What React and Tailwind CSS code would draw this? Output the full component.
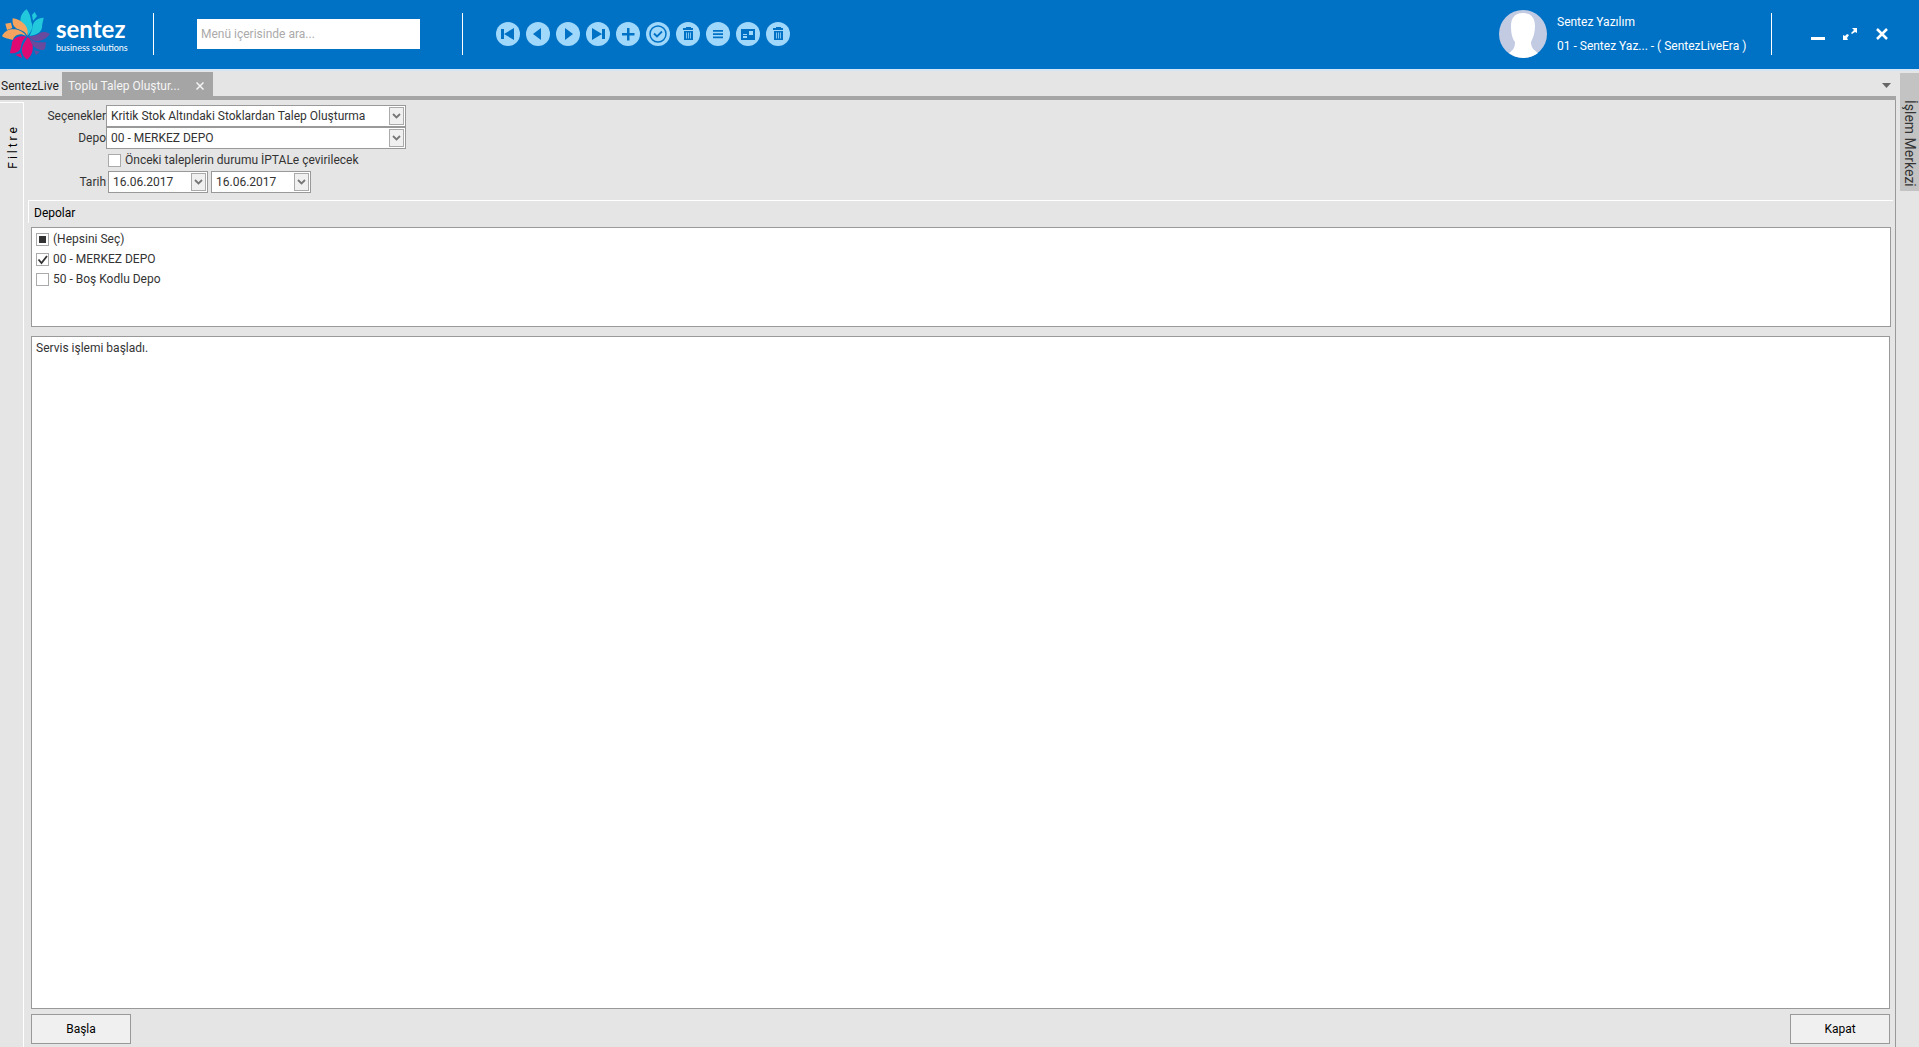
import React, { useEffect, useRef, useState } from "react";

const toolbar = [
  { label: "İlk kayıt", icon: <path d="M5 7h3v10H5zM18 6v12l-10-6z" /> },
  { label: "Önceki kayıt", icon: <path d="M15 6v12l-8-6z" /> },
  { label: "Sonraki kayıt", icon: <path d="M9 6v12l8-6z" /> },
  { label: "Son kayıt", icon: <path d="M16 7h3v10h-3zM6 6v12l10-6z" /> },
  { label: "Yeni", icon: <path d="M11 6h2.500v5h5v2.500h-5v5H11v-5H6V11h5z" /> },
  {
    label: "Kaydet",
    icon: (
      <g fill="none" stroke="#0072c6">
        <circle cx="12" cy="12" r="8" strokeWidth="1.5" />
        <path d="M8 11.5l3 3 5-5" strokeWidth="1.8" />
      </g>
    ),
  },
  { label: "Sil", icon: <TrashShape /> },
  { label: "Liste", icon: <path d="M7 8h10v1.800H7zM7 11.200h10V13H7zM7 14.400h10v1.800H7z" /> },
  {
    label: "Kart",
    icon: (
      <path
        fillRule="evenodd"
        d="M5 7h14v11H5zM13 9v4h4V9zM7 12v1h4v-1zM7 14v2h4v-2z"
      />
    ),
  },
  { label: "Temizle", icon: <TrashShape /> },
];

function TrashShape() {
  return (
    <path
      fillRule="evenodd"
      d="M10 5h5v1h2v2H7V6h3zM8 9h9v9H8zM10 10.500v6h.8v-6zM12.100 10.500v6h.8v-6zM14.200 10.500v6h.8v-6z"
    />
  );
}

const Logo = () => (
  <a href="#" aria-label="sentez" className="flex w-[153px] items-center">
    <svg viewBox="0 0 162 168" className="h-[56px] w-[54px]">
      <g fill="#22c9dc">
        <path d="M80 10C62 22 56 42 66 58C74 70 84 76 84 88C98 72 100 60 94 48C92 32 88 20 80 10z" />
        <path d="M96 27l8-9l7 13l-12 13z" />
        <path d="M131 35C112 36 100 46 98 60C96 74 92 84 88 90C108 88 124 80 126 64C126 52 130 44 131 35z" />
      </g>
      <g fill="#f4a45f">
        <path d="M38 37C36 56 42 66 56 70C68 74 78 80 82 90C86 74 80 60 70 52C60 42 50 38 38 37z" />
        <path d="M16 53l17-3l4 16l-16 6z" />
        <path d="M6 90C16 72 30 68 46 70C62 73 72 80 78 90C60 80 44 86 38 102C28 98 14 98 6 90z" />
      </g>
      <g fill="#dc0a72">
        <path d="M36 108C36 120 30 134 30 142C46 142 60 138 63 122C65 106 72 98 80 92C60 88 42 94 36 108z" />
        <path d="M46 147l16-5l4 14z" />
        <path d="M82 161C66 150 62 134 69 118C74 106 80 100 82 93C96 100 100 118 98 132C96 146 88 154 82 161z" />
      </g>
      <g fill="#6a4a9c">
        <path d="M150 84C136 76 126 76 116 84C104 90 94 92 86 89C92 102 104 108 120 104C134 102 142 94 150 84z" />
        <path d="M87 94C96 108 110 110 122 109L138 109C136 122 138 128 130 132C112 134 94 122 87 94z" />
        <path d="M102 133l18 4l-12 10z" />
      </g>
    </svg>
    <span className="ml-[2px] flex flex-col font-['Lato',sans-serif] text-white">
      <span className="text-[24px] leading-[26px] font-bold">sentez</span>
      <span className="text-[9px] leading-[11px] whitespace-nowrap">
        business solutions
      </span>
    </span>
  </a>
);

const Chevron = () => (
  <svg viewBox="0 0 9 6" className="h-[6px] w-[9px]" fill="none" stroke="#777" strokeWidth="1.8">
    <path d="M1 1l3.500 3.500L8 1" />
  </svg>
);

const Combo = ({ id, options }) => (
  <div className="grid h-[22px] border border-[#999] bg-white">
    <select
      id={id}
      className="col-start-1 row-start-1 w-full appearance-none bg-transparent pl-1 pr-6 outline-none"
    >
      {options.map((o) => (
        <option key={o}>{o}</option>
      ))}
    </select>
    <span className="pointer-events-none col-start-1 row-start-1 m-px flex w-[15px] items-center justify-center justify-self-end border border-[#aaa] bg-[#f0f0f0]">
      <Chevron />
    </span>
  </div>
);

const DateBox = ({ id, label }) => (
  <div className="flex h-[22px] w-[100px] border border-[#999] bg-white">
    <input
      id={id}
      aria-label={label}
      defaultValue="16.06.2017"
      className="min-w-0 flex-1 pl-1 outline-none"
    />
    <button
      type="button"
      aria-label="Takvim"
      className="m-px flex w-[15px] items-center justify-center border border-[#aaa] bg-[#f0f0f0]"
    >
      <Chevron />
    </button>
  </div>
);

const Check = ({ id, label, checked = false, partial = false, onChange }) => {
  const ref = useRef(null);

  useEffect(() => {
    ref.current.indeterminate = partial;
  }, [partial]);

  return (
    <div className="flex h-5 items-center gap-1">
      <span className="grid">
        <input
          ref={ref}
          id={id}
          type="checkbox"
          checked={checked}
          onChange={onChange}
          className="col-start-1 row-start-1 size-[13px] appearance-none border border-[#aaa] bg-white"
        />
        <svg viewBox="0 0 13 13" className="pointer-events-none col-start-1 row-start-1 size-[13px]">
          {partial && <path d="M3 3h7v7H3z" fill="#333" />}
          {checked && !partial && (
            <path d="M2.500 6.500l3 3.500L11 3" fill="none" stroke="#333" strokeWidth="1.800" />
          )}
        </svg>
      </span>
      <label htmlFor={id}>{label}</label>
    </div>
  );
};

const Header = () => (
  <header className="flex h-[71px] items-center border-b-2 border-[#d5e7f6] bg-[#0072c6] pb-px text-white">
    <Logo />
    <span className="h-[42px] w-px bg-white" />
    <input
      type="search"
      aria-label="Menü içerisinde ara"
      placeholder="Menü içerisinde ara..."
      className="ml-[43px] h-[30px] w-[223px] bg-white px-1 text-black outline-none placeholder:text-[#aaa]"
    />
    <span className="ml-[42px] h-[42px] w-px bg-white" />
    <nav className="ml-[33px] flex gap-[6px]">
      {toolbar.map((t) => (
        <button
          key={t.label}
          type="button"
          aria-label={t.label}
          className="size-6 rounded-full bg-[#9fd8fb]"
        >
          <svg viewBox="0 0 24 24" className="size-6" fill="#0072c6">
            {t.icon}
          </svg>
        </button>
      ))}
    </nav>
    <div className="ml-auto flex items-center">
      <svg viewBox="0 0 48 48" className="size-12">
        <circle cx="24" cy="24" r="24" fill="#c3cbe2" />
        <path
          d="M24 3c9 0 12 6 12 13c0 7-2 12-4 16c0 6 3 8 7 11a24 24 0 0 1-29 0c4-3 6-5 6-11c-3-4-4-9-4-16c0-7 3-13 12-13z"
          fill="#fff"
        />
      </svg>
      <div className="ml-[10px] w-[214px] leading-6 whitespace-nowrap">
        <p>Sentez Yazılım</p>
        <p>01 - Sentez Yaz... - ( SentezLiveEra )</p>
      </div>
      <span className="h-[42px] w-px bg-white" />
      <div className="mr-[30px] ml-[39px] flex gap-[18px]">
        <button type="button" aria-label="Küçült">
          <svg viewBox="0 0 14 14" className="size-[14px]">
            <path d="M0 10h14v3H0z" fill="#fff" />
          </svg>
        </button>
        <button type="button" aria-label="Boyutlandır">
          <svg viewBox="0 0 14 14" className="size-[14px]" fill="#fff">
            <path d="M9 1h5v5l-2-1l-3 2l-1-1l3-3zM0 8l2 1l2-2l2 1l-2 3l1 2H0z" />
          </svg>
        </button>
        <button type="button" aria-label="Kapat">
          <svg viewBox="0 0 14 14" className="size-[14px]" stroke="#fff" strokeWidth="2.500">
            <path d="M2 2l10 10M12 2L2 12" />
          </svg>
        </button>
      </div>
    </div>
  </header>
);

const Tabs = () => (
  <div className="flex h-[29px] items-stretch border-b-4 border-[#a5a5a5] pt-px">
    <button type="button" className="w-[62px] pt-[3px] pl-px text-left whitespace-nowrap text-[#222]">
      SentezLive
    </button>
    <div className="flex w-[151px] items-center justify-between bg-[#a5a5a5] pt-[3px] pr-[9px] pl-[6px] text-[#f5f5f5]">
      <button type="button" className="whitespace-nowrap">
        Toplu Talep Oluştur...
      </button>
      <button type="button" aria-label="Sekmeyi kapat">
        <svg viewBox="0 0 8 8" className="size-2" stroke="#f5f5f5" strokeWidth="1.500">
          <path d="M.5.5l7 7M7.500.5l-7 7" />
        </svg>
      </button>
    </div>
    <button type="button" aria-label="Sekmeler" className="mr-[5px] ml-auto pt-[2px]">
      <svg viewBox="0 0 9 5" className="h-[5px] w-[9px]">
        <path d="M0 0h9L4.500 5z" fill="#666" />
      </svg>
    </button>
  </div>
);

const Filters = () => (
  <div className="grid grid-cols-[78px_300px] pt-[5px]">
    <label htmlFor="secenek" className="pt-px text-right leading-[21px]">
      Seçenekler
    </label>
    <Combo id="secenek" options={["Kritik Stok Altındaki Stoklardan Talep Oluşturma"]} />
    <label htmlFor="depo" className="pt-px text-right leading-[21px]">
      Depo
    </label>
    <Combo id="depo" options={["00 - MERKEZ DEPO", "50 - Boş Kodlu Depo"]} />
    <div className="col-start-2 py-px pl-[2px]">
      <IptalCheck />
    </div>
    <label htmlFor="tarih1" className="pt-px text-right leading-[21px]">
      Tarih
    </label>
    <div className="flex gap-[3px] pl-[2px]">
      <DateBox id="tarih1" />
      <DateBox id="tarih2" label="Bitiş tarihi" />
    </div>
  </div>
);

const IptalCheck = () => {
  const [on, setOn] = useState(false);
  return (
    <Check
      id="iptal"
      label="Önceki taleplerin durumu İPTALe çevirilecek"
      checked={on}
      onChange={() => setOn(!on)}
    />
  );
};

const Depolar = () => {
  const [depots, setDepots] = useState([
    { id: "d00", name: "00 - MERKEZ DEPO", on: true },
    { id: "d50", name: "50 - Boş Kodlu Depo", on: false },
  ]);
  const count = depots.filter((d) => d.on).length;
  const all = count === depots.length;

  const toggle = (id) =>
    setDepots(depots.map((d) => (d.id === id ? { ...d, on: !d.on } : d)));

  return (
    <section className="mt-[7px] mr-[2px] ml-1 border-t border-white">
      <h2 className="h-[22px] border-l border-white pl-[5px] leading-6 text-black">
        Depolar
      </h2>
      <div className="mt-1 mr-[2px] ml-[3px] h-[100px] border border-[#999] bg-white px-1 pt-px">
        <Check
          id="hepsi"
          label="(Hepsini Seç)"
          checked={all}
          partial={count > 0 && !all}
          onChange={() => setDepots(depots.map((d) => ({ ...d, on: !all })))}
        />
        {depots.map((d) => (
          <Check key={d.id} id={d.id} label={d.name} checked={d.on} onChange={() => toggle(d.id)} />
        ))}
      </div>
    </section>
  );
};

const App = () => {
  return (
    <div className="flex min-h-screen flex-col bg-[#e5e5e5] font-['Roboto','Open_Sans',sans-serif] text-[12px] text-[#333]">
      <Header />
      <div className="flex flex-1">
        <main className="flex min-w-0 flex-1 flex-col">
          <Tabs />
          <div className="flex flex-1 border-r border-[#999]">
            <aside className="mt-[2px] w-6 border-t border-r border-white">
              <button
                type="button"
                className="mt-6 ml-1 rotate-180 leading-[18px] text-black [writing-mode:vertical-rl]"
              >
                F i l t r e
              </button>
            </aside>
            <div className="flex min-w-0 flex-1 flex-col">
              <div className="pl-1">
                <Filters />
              </div>
              <Depolar />
              <div className="mt-[9px] mr-[5px] ml-[7px] flex-1 border border-[#999] bg-white px-1 py-[2px]">
                Servis işlemi başladı.
              </div>
              <div className="mt-[5px] mr-[5px] mb-[3px] ml-[7px] flex justify-between text-black">
                <button type="button" className="h-[30px] w-[100px] border border-[#999] bg-[#f0f0f0]">
                  Başla
                </button>
                <button type="button" className="h-[30px] w-[100px] border border-[#999] bg-[#f0f0f0]">
                  Kapat
                </button>
              </div>
            </div>
          </div>
        </main>
        <aside className="w-[23px] pt-[2px] pl-1">
          <button
            type="button"
            className="flex h-[118px] w-[19px] items-center justify-end bg-[#c3c3c3] pb-1 text-[14px] leading-[19px] [writing-mode:vertical-rl]"
          >
            İşlem Merkezi
          </button>
        </aside>
      </div>
    </div>
  );
};

export default App;
